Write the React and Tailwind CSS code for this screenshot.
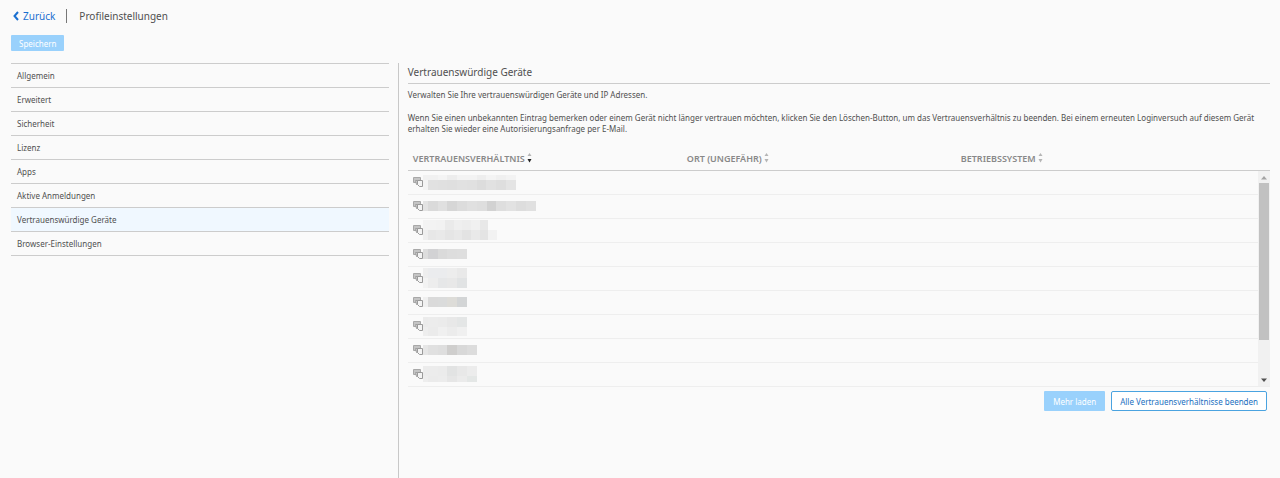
import { useState } from "react";

const navItems = [
  "Allgemein",
  "Erweitert",
  "Sicherheit",
  "Lizenz",
  "Apps",
  "Aktive Anmeldungen",
  "Vertrauenswürdige Geräte",
  "Browser-Einstellungen",
];

const columns = [
  { key: "trust", label: "Vertrauensverhältnis", width: "w-[274px]" },
  { key: "place", label: "Ort (ungefähr)", width: "w-[274px]" },
  { key: "os", label: "Betriebssystem", width: "" },
];

// Masked device names: every line is a strip of grey cells, the first one half as wide
const devices = [
  {
    width: 93,
    lines: [
      { height: 5, cells: ["#f1f1f1", "#f1f1f1", "#f4f4f4", "#ededed", "#f3f3f3", "#f3f3f3", "#eeeeee", "#f4f4f4", "#f0f0f0", "#f3f3f3"] },
      { height: 10, cells: ["#f4f4f4", "#e1e1e1", "#e0e0e0", "#dfdfdf", "#e1e1e1", "#e0e0e0", "#dcdcdc", "#e1e1e1", "#dedede", "#e4e4e4"] },
    ],
  },
  {
    width: 113,
    lines: [
      { height: 10, cells: ["#e3e3e3", "#dadada", "#e0e0e0", "#d6d6d6", "#dcdcdc", "#e0e0e0", "#dedede", "#d2d2d2", "#dedede", "#e2e2e2", "#dddddd", "#e0e0e0"] },
    ],
  },
  {
    width: 74,
    lines: [
      { height: 10, cells: ["#f3f3f3", "#f3f3f3", "#f2f2f2", "#eaeaea", "#efefef", "#ededed", "#f0f0f0", "#e8e8e8", "#fafafa"] },
      { height: 10, cells: ["#efefef", "#e7e7e7", "#e9e9e9", "#e5e5e5", "#e8e8e8", "#e3e3e3", "#e9e9e9", "#e4e4e4", "#f2f2f2"] },
    ],
  },
  {
    width: 44,
    lines: [{ height: 10, cells: ["#dddddd", "#d2d2d4", "#dadada", "#dddddd", "#dedede"] }],
  },
  {
    width: 44,
    lines: [
      { height: 10, cells: ["#eeeeee", "#ebecee", "#ebecee", "#ededed", "#e9e9e9"] },
      { height: 10, cells: ["#f3f3f3", "#ededed", "#e6e7e8", "#e8e8e8", "#e1e3e4"] },
    ],
  },
  {
    width: 44,
    lines: [{ height: 10, cells: ["#f0f0f0", "#dadada", "#dadbdb", "#dddcd8", "#d3d5d6"] }],
  },
  {
    width: 44,
    lines: [
      { height: 10, cells: ["#ebebeb", "#ececec", "#ebebeb", "#e8e8e8", "#e4e6e6"] },
      { height: 9, cells: ["#eeeeee", "#ebebeb", "#f0f0f0", "#ececec", "#f0f0f0"] },
    ],
  },
  {
    width: 54,
    lines: [{ height: 10, cells: ["#e6e6e6", "#e0e0e0", "#dedede", "#cfcecd", "#d8d8d8", "#dcdcdc"] }],
  },
  {
    width: 54,
    lines: [
      { height: 10, cells: ["#ececec", "#ececec", "#ebebeb", "#e2e3e3", "#e8e8e8", "#ececec"] },
      { height: 6, cells: ["#eeeeee", "#ebebeb", "#ececec", "#e6e6e6", "#ebebeb", "#e4e7e6"] },
    ],
  },
];

function SortArrows({ active }) {
  return (
    <svg width="5" height="10" viewBox="0 0 5 10" className="shrink-0">
      <path d="M2.5 0 4.5 3h-4z" fill="#b5b5b5" />
      <path d="M2.5 9.5 .5 6h4z" fill={active ? "#222222" : "#b5b5b5"} />
    </svg>
  );
}

function DeviceIcon() {
  return (
    <svg width="10" height="10" viewBox="0 0 10 10" className="shrink-0">
      <path d="M.5 .5h7v5h-7z" fill="#c4c4c4" stroke="#a8a8a8" />
      <path d="M2.5 3.5h5v4h-4z" fill="#d4d4d4" stroke="#a0a0a0" />
      <path d="M4.5 3.5h5v6h-3l-2-2z" fill="#f4f4f4" stroke="#9a9a9a" />
    </svg>
  );
}

function MaskedName({ width, lines }) {
  return (
    <div style={{ width }}>
      {lines.map((line, i) => (
        <div key={i} className="flex" style={{ height: line.height }}>
          {line.cells.map((color, j) => (
            <span
              key={j}
              className={j === 0 ? "w-[5px] shrink-0" : "flex-1"}
              style={{ backgroundColor: color }}
            />
          ))}
        </div>
      ))}
    </div>
  );
}

export default function App() {
  const [active, setActive] = useState("Vertrauenswürdige Geräte");
  const [sortBy, setSortBy] = useState("trust");

  return (
    <div className="flex min-h-screen flex-col bg-[#fafafa] font-['Noto_Sans','Open_Sans',sans-serif] text-[8px] leading-[11px] text-[#505050]">
      {/* Header */}
      <header className="flex h-8 items-center pl-[13px] text-[10px]">
        <a href="#" className="flex items-center gap-1 text-[#1a6fd0]">
          <svg width="6" height="10" viewBox="0 0 6 10">
            <path d="M5 1 1.5 5 5 9" fill="none" stroke="currentColor" strokeWidth="2" />
          </svg>
          Zurück
        </a>
        <span className="ml-[11px] h-[14px] w-px bg-[#777777]" />
        <h1 className="ml-3">Profileinstellungen</h1>
      </header>

      <div className="pt-[3px] pb-3 pl-[11px]">
        <button type="button" className="block h-4 rounded-[1px] bg-[#99d1fc] px-2 text-white">
          Speichern
        </button>
      </div>

      <div className="flex flex-1">
        {/* Navigation */}
        <nav className="w-[31%] pr-2 pl-[11px]">
          <ul className="border-t border-[#cccccc]">
            {navItems.map((item) => (
              <li key={item} className="border-b border-[#cccccc]">
                <button
                  type="button"
                  onClick={() => setActive(item)}
                  className={`block h-[23px] w-full px-[6px] text-left ${active === item ? "bg-[#f0f8ff]" : ""}`}
                >
                  {item}
                </button>
              </li>
            ))}
          </ul>
        </nav>

        {/* Content */}
        <main className="ml-px min-w-0 flex-1 border-l border-[#c8c8c8] pr-[10px] pl-[9px]">
          <h2 className="border-b border-[#cccccc] pt-[3px] pb-[5px] text-[10px] leading-[12px]">
            Vertrauenswürdige Geräte
          </h2>
          <p className="mt-[5px]">Verwalten Sie Ihre vertrauenswürdigen Geräte und IP Adressen.</p>
          <p className="mt-3">
            Wenn Sie einen unbekannten Eintrag bemerken oder einem Gerät nicht länger vertrauen möchten, klicken Sie den
            Löschen-Button, um das Vertrauensverhältnis zu beenden. Bei einem erneuten Loginversuch auf diesem Gerät
            erhalten Sie wieder eine Autorisierungsanfrage per E-Mail.
          </p>

          <div className="mt-3 flex border-b border-[#eeeeee]">
            <table className="w-full table-fixed border-collapse">
              <thead>
                <tr className="h-6 border-b border-[#cccccc]">
                  {columns.map((col) => (
                    <th key={col.key} className={`p-0 pl-[5px] text-left font-semibold text-[#888888] ${col.width}`}>
                      <button
                        type="button"
                        onClick={() => setSortBy(col.key)}
                        className="flex items-center gap-[2px] pt-px text-[9px] uppercase"
                      >
                        {col.label}
                        <SortArrows active={sortBy === col.key} />
                      </button>
                    </th>
                  ))}
                </tr>
              </thead>
              <tbody>
                {devices.map((device, i) => (
                  <tr key={i} className="h-6 border-b border-[#eeeeee] last:border-b-0">
                    <td className="p-0 pl-[5px]">
                      <div className="flex items-center">
                        <DeviceIcon />
                        <MaskedName {...device} />
                      </div>
                    </td>
                    <td />
                    <td />
                  </tr>
                ))}
              </tbody>
            </table>
            {/* Scrollbar */}
            <div className="mt-6 flex w-3 shrink-0 flex-col items-center border-t border-[#cccccc] bg-[#f1f1f1]">
              <svg width="6" height="12" viewBox="0 0 6 12" className="shrink-0">
                <path d="M3 5 6 8.500H0z" fill="#a3a3a3" />
              </svg>
              <div className="h-[157px] w-[10px] bg-[#c1c1c1]" />
              <svg width="6" height="12" viewBox="0 0 6 12" className="mt-auto shrink-0">
                <path d="M3 8 6 4.500H0z" fill="#505050" />
              </svg>
            </div>
          </div>

          <div className="mt-1 flex justify-end gap-[6px] pr-[3px]">
            <button type="button" className="h-5 rounded-[1px] bg-[#99d1fc] px-[9px] text-white">
              Mehr laden
            </button>
            <button
              type="button"
              className="h-5 rounded-[2px] border border-[#4aa3e0] bg-white px-2 text-[#1a6fc0]"
            >
              Alle Vertrauensverhältnisse beenden
            </button>
          </div>
        </main>
      </div>
    </div>
  );
}
